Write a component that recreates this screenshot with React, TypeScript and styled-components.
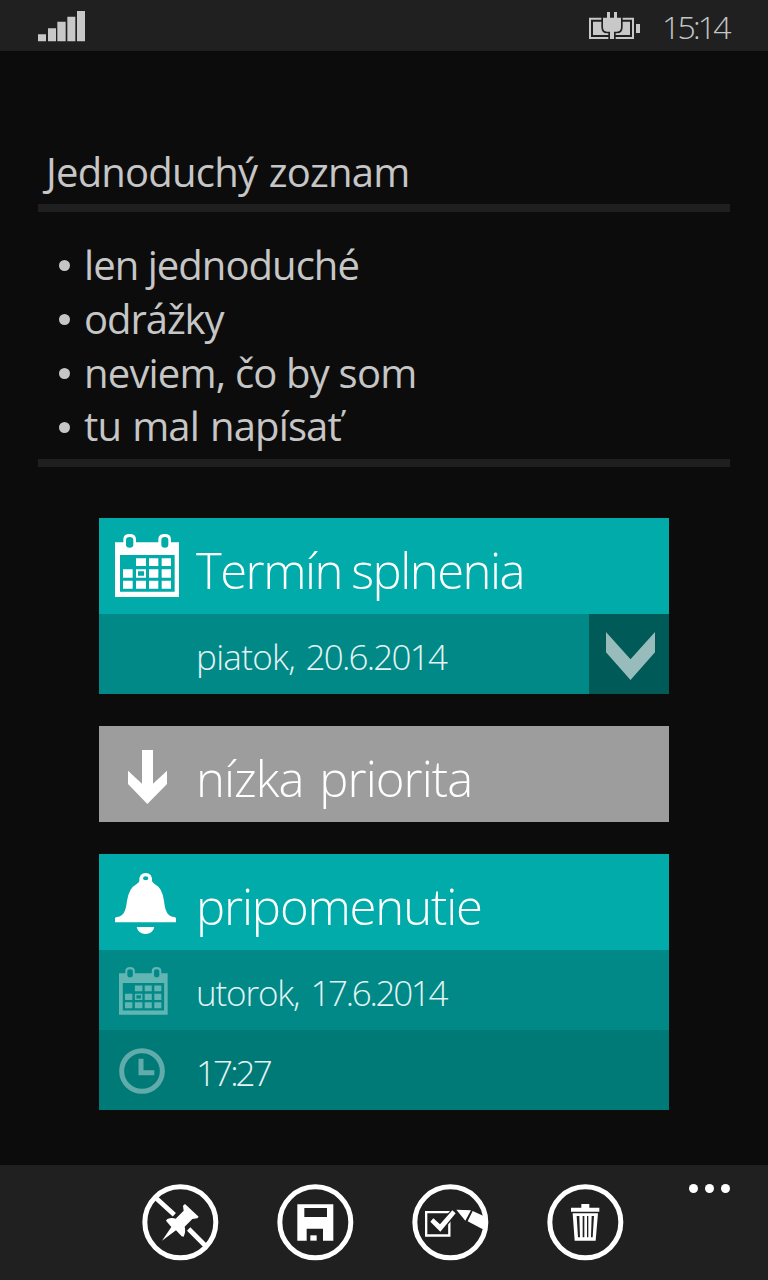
import React from "react";
import styled, { createGlobalStyle } from "styled-components";

const GlobalStyle = createGlobalStyle`
  html, body { margin: 0; background: #0c0c0c; }
  * { box-sizing: border-box; }
`;

const Screen = styled.div`
  width: 768px;
  height: 1280px;
  display: flex;
  flex-direction: column;
  overflow: hidden;
  background: #0c0c0c;
  color: #c6c6c6;
  font-family: "Open Sans", "Noto Sans", sans-serif;
  white-space: nowrap;
`;

const StatusBar = styled.header`
  height: 51px;
  flex: none;
  display: flex;
  align-items: flex-start;
  justify-content: space-between;
  padding: 11px 38px 0;
  background: #202020;
  svg { display: block; }
`;

const StatusRight = styled.div`
  display: flex;
  align-items: flex-start;
`;

const Clock = styled.span`
  width: 68px;
  margin: -7px 0 0 22px;
  font-size: 32px;
  line-height: 46px;
  font-weight: 350;
  letter-spacing: -2.8px;
`;

const Content = styled.main`
  flex: 1;
  padding: 93px 38px 0;
`;

const Title = styled.h1`
  margin: 0;
  padding-left: 8px;
  height: 60px;
  font-size: 40px;
  line-height: 55px;
  font-weight: 400;
  letter-spacing: -0.78px;
  word-spacing: 2px;
`;

const Rule = styled.div`
  height: 8px;
  background: #1f1f1f;
`;

const List = styled.ul`
  list-style: none;
  margin: 0;
  padding: 26px 0 5.8px 21px;
`;

const Item = styled.li<{ $track: number; $word?: number }>`
  display: flex;
  align-items: center;
  gap: 14px;
  height: 53.8px;
  font-size: 40px;
  line-height: 53.8px;
  letter-spacing: ${(p) => p.$track}px;
  word-spacing: ${(p) => p.$word ?? 0}px;
  &::before {
    content: "";
    width: 11px;
    height: 11px;
    margin-top: 2px;
    border-radius: 50%;
    background: #c6c6c6;
  }
`;

const Cards = styled.div`
  display: flex;
  flex-direction: column;
  gap: 32px;
  padding: 51px 61px 0;
`;

const Card = styled.section`
  color: #fff;
`;

const Row = styled.div<{ $bg: string; $head?: boolean }>`
  display: flex;
  align-items: stretch;
  height: ${(p) => (p.$head ? 96 : 80)}px;
  background: ${(p) => p.$bg};
`;

const IconCell = styled.div<{ $x: number; $y: number; $faded?: boolean }>`
  width: 97px;
  flex: none;
  padding: ${(p) => p.$y}px 0 0 ${(p) => p.$x}px;
  opacity: ${(p) => (p.$faded ? 0.38 : 1)};
  svg { display: block; }
`;

const Heading = styled.h2<{ $track: number; $word?: number }>`
  margin: 0;
  flex: 1;
  font-size: 49px;
  line-height: 104px;
  font-weight: 300;
  letter-spacing: ${(p) => p.$track}px;
  word-spacing: ${(p) => p.$word ?? 0}px;
`;

const Value = styled.span<{ $track: number; $word?: number }>`
  flex: 1;
  font-size: 35px;
  line-height: 85px;
  font-weight: 300;
  color: #e4f3f3;
  letter-spacing: ${(p) => p.$track}px;
  word-spacing: ${(p) => p.$word ?? 0}px;
`;

const Digits = styled.span<{ $track: number }>`
  letter-spacing: ${(p) => p.$track}px;
`;

const Expander = styled.button`
  display: flex;
  align-items: flex-start;
  width: 80.5px;
  border: 0;
  padding: 18px 0 0 17.5px;
  background: #005a58;
`;

const AppBar = styled.footer`
  height: 115px;
  flex: none;
  display: flex;
  align-items: flex-start;
  padding: 19px 38px 0 142px;
  background: #202020;
`;

const Actions = styled.div`
  display: flex;
  gap: 58.33px;
`;

const Action = styled.button`
  width: 76.67px;
  height: 76.67px;
  padding: 0;
  border: 0;
  background: none;
  svg { display: block; }
`;

const More = styled.button`
  display: flex;
  gap: 7px;
  margin-left: auto;
  padding: 0;
  border: 0;
  background: none;
  i {
    width: 9px;
    height: 9px;
    border-radius: 50%;
    background: #fff;
  }
`;

const Signal = () => (
  <svg width="48" height="31" viewBox="0 0 144 93" fill="#c8c8c8">
    <path d="M0 70h24v21H0zM30 52h24v39H30zM58 32h25v59H58zM88 17h24v74H88zM117 0h24v91h-24z" />
  </svg>
);

const Battery = () => (
  <svg width="51" height="29" viewBox="0 0 153 87" fill="#c8c8c8">
    <path fillRule="evenodd" d="M0 20h135v64H0zM6 26v52h123V26z" />
    <path d="M12 32h111v40H12zM141 39h12v27h-12z" />
    <path
      d="M42 20h54v28q0 14-12 14h-9v24H63V62h-9q-12 0-12-14z"
      stroke="#202020"
      strokeWidth="10"
    />
    <path d="M54 3h9v17h12V3h9v17h12v28q0 14-12 14h-9v22H63V62h-9q-12 0-12-14V20h12z" />
  </svg>
);

const CalendarIcon = ({ width }: { width: number }) => (
  <svg width={width} height={(width * 189) / 193} viewBox="0 0 193 189" fill="#fff">
    <path
      fillRule="evenodd"
      d="M0 25h25V16Q25 0 44 0T63 16V25H130V16Q130 0 149 0T168 16V25H193V189H0ZM15 63V173H179V63ZM33 18V32Q33 41 44 41T55 32V18Q55 9 44 9T33 18ZM139 18V32Q139 41 149.5 41T160 32V18Q160 9 149.5 9T139 18Z"
    />
    <path
      fillRule="evenodd"
      d="M63 73h30v23H63zM102 73h28v23h-28zM140 73h28v23h-28zM24 106h29v25H24zM63 106h30v25H63zM69 112v13h18v-13zM102 106h28v25h-28zM140 106h28v25h-28zM24 140h29v24H24zM63 140h30v24H63zM102 140h28v24h-28zM140 140h28v24h-28z"
    />
  </svg>
);

const ArrowDown = () => (
  <svg width="39" height="54" viewBox="0 0 117 162" fill="#fff">
    <path d="M42 0H75V101L117 62V102L58 162L0 102V62L42 101Z" />
  </svg>
);

const Bell = () => (
  <svg width="61" height="61" viewBox="0 0 183 183" fill="#fff">
    <path
      fillRule="evenodd"
      d="M73 24Q72 0 92 0T111 24Q112 29 119 33Q143 46 147 84C150 107 154 130 177 132Q183 133 183 135V148H0V135Q0 133 6 132C29 130 33 107 36 84Q41 46 65 33Q72 29 73 24ZM84 16A8 6 0 1 0 100 16A8 6 0 1 0 84 16Z"
    />
    <path d="M65 162H118Q113 183 91.5 183T65 162Z" />
  </svg>
);

const ClockIcon = () => (
  <svg width="46" height="46" viewBox="0 0 138 138" fill="none" stroke="#fff" strokeWidth="15">
    <circle cx="69" cy="69" r="61" />
    <path d="M66 32V74.5H106" />
  </svg>
);

const Chevron = () => (
  <svg width="49" height="48" viewBox="0 0 147 144" fill="#98bcbb">
    <path d="M0 0L73.5 82L147 0V61L73.5 144L0 61Z" />
  </svg>
);

const RoundIcon = ({ children }: { children: React.ReactNode }) => (
  <svg width="76.67" height="76.67" viewBox="37 72 230 230" fill="#fff">
    <circle cx="152" cy="187" r="106.5" fill="none" stroke="#fff" strokeWidth="15" />
    {children}
  </svg>
);

const App = () => (
  <>
    <GlobalStyle />
    <Screen>
      <StatusBar>
        <Signal />
        <StatusRight>
          <Battery />
          <Clock>15:14</Clock>
        </StatusRight>
      </StatusBar>
      <Content>
        <Title>Jednoduchý zoznam</Title>
        <Rule />
        <List>
          <Item $track={-0.95}>len jednoduché</Item>
          <Item $track={-1.05}>odrážky</Item>
          <Item $track={-0.8}>neviem, čo by som</Item>
          <Item $track={-0.85} $word={1.5}>tu mal napísať</Item>
        </List>
        <Rule />
        <Cards>
          <Card>
            <Row $bg="#00abaa" $head>
              <IconCell $x={16} $y={16}>
                <CalendarIcon width={64.33} />
              </IconCell>
              <Heading $track={-1.5} $word={-2}>Termín splnenia</Heading>
            </Row>
            <Row $bg="#008987">
              <IconCell $x={0} $y={0} />
              <Value $track={-0.7} $word={2}>
                piatok, <Digits $track={-1.75}>20.6.2014</Digits>
              </Value>
              <Expander aria-label="Rozbaliť">
                <Chevron />
              </Expander>
            </Row>
          </Card>
          <Card>
            <Row $bg="#9d9d9d" $head>
              <IconCell $x={28.67} $y={24}>
                <ArrowDown />
              </IconCell>
              <Heading $track={-0.95} $word={4}>nízka priorita</Heading>
            </Row>
          </Card>
          <Card>
            <Row $bg="#00abaa" $head>
              <IconCell $x={16} $y={19}>
                <Bell />
              </IconCell>
              <Heading $track={-1.15}>pripomenutie</Heading>
            </Row>
            <Row $bg="#008987">
              <IconCell $x={20.33} $y={17} $faded>
                <CalendarIcon width={48.67} />
              </IconCell>
              <Value $track={-1.15} $word={3}>
                utorok, <Digits $track={-2.3}>17.6.2014</Digits>
              </Value>
            </Row>
            <Row $bg="#007a77">
              <IconCell $x={20.33} $y={18.5} $faded>
                <ClockIcon />
              </IconCell>
              <Value $track={-2.9}>17:27</Value>
            </Row>
          </Card>
        </Cards>
      </Content>
      <AppBar>
        <Actions>
          <Action aria-label="Odopnúť">
            <RoundIcon>
              <path d="M78 113L134 164M177 207L228 258" stroke="#fff" strokeWidth="14" />
              <path d="M97 242L125 201L109 182L113 177Q126 171 138 176L162 152L160 137L166 132L207 170L203 175L188 177L165 200Q169 214 162 230L156 229L139 211Z" />
            </RoundIcon>
          </Action>
          <Action aria-label="Uložiť">
            <RoundIcon>
              <path
                fillRule="evenodd"
                d="M98 133H206V242H175V206H126V242H98ZM119 144V171H187V144Z"
              />
              <path d="M137 226h19v16h-19z" />
            </RoundIcon>
          </Action>
          <Action aria-label="Upraviť">
            <RoundIcon>
              <path d="M79.5 156.5H149V226.5H79.5Z" fill="none" stroke="#fff" strokeWidth="7" />
              <path
                d="M92 185L101 175L121 193L158 151L168 160L122 215Z"
                stroke="#202020"
                strokeWidth="8"
                paintOrder="stroke"
              />
              <path d="M170 149L214 151L197 182ZM219 153L252 168L262 200L248 207L204 184Z" />
            </RoundIcon>
          </Action>
          <Action aria-label="Odstrániť">
            <RoundIcon>
              <path d="M140 132h24v11h30v12h-85v-12h31z" />
              <path
                fillRule="evenodd"
                d="M114 160H190L183 242H120ZM126 168L130 232H136L134 168ZM144 168V232H149V168ZM157 168V232H161V168ZM171 168L169 232H174L178 168Z"
              />
            </RoundIcon>
          </Action>
        </Actions>
        <More aria-label="Viac">
          <i />
          <i />
          <i />
        </More>
      </AppBar>
    </Screen>
  </>
);

export default App;
